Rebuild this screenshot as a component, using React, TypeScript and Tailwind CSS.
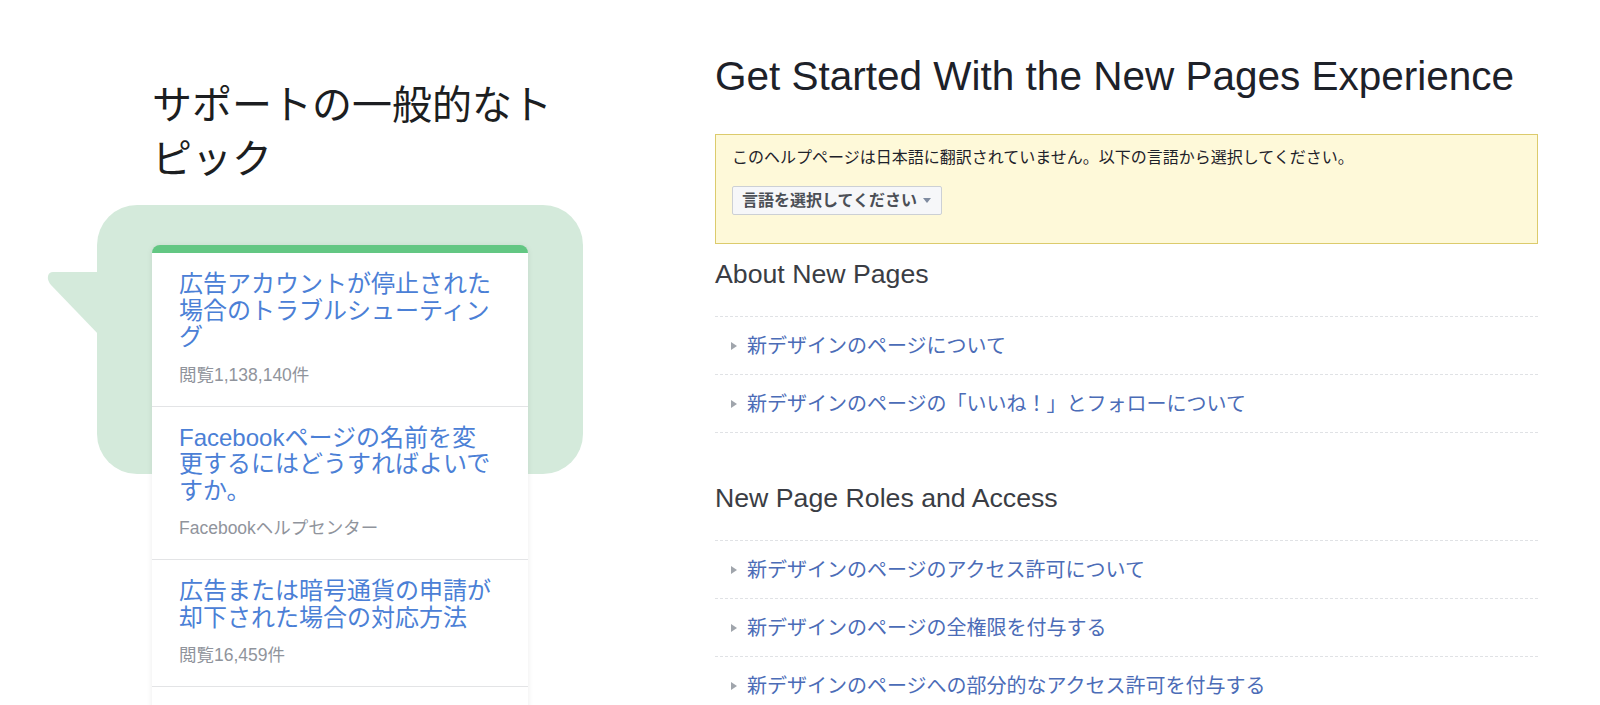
import React from "react";

const topics = [
  {
    title: "広告アカウントが停止された場合のトラブルシューティング",
    meta: "閲覧1,138,140件",
  },
  {
    title: "Facebookページの名前を変更するにはどうすればよいですか。",
    meta: "Facebookヘルプセンター",
  },
  {
    title: "広告または暗号通貨の申請が却下された場合の対応方法",
    meta: "閲覧16,459件",
  },
];

const sections = [
  {
    heading: "About New Pages",
    links: ["新デザインのページについて", "新デザインのページの「いいね！」とフォローについて"],
  },
  {
    heading: "New Page Roles and Access",
    links: [
      "新デザインのページのアクセス許可について",
      "新デザインのページの全権限を付与する",
      "新デザインのページへの部分的なアクセス許可を付与する",
    ],
  },
];

function TopicCard() {
  return (
    <div className="relative mx-[55px] bg-white border-t-[8px] border-[#63c783] rounded-t-[8px] shadow-[0_1px_6px_rgba(0,0,0,0.08)]">
      {topics.map((t) => (
        <div key={t.meta} className="pl-[27px] pr-[33px] pt-[18px] pb-[21px] border-b border-[#e3e4e6]">
          <a href="#" className="block text-[24px] leading-[26.5px] text-[#4b80d6]">
            {t.title}
          </a>
          <div className="mt-[14px] text-[17.5px] leading-[20px] text-[#90949c]">{t.meta}</div>
        </div>
      ))}
      <div className="h-[60px]" />
    </div>
  );
}

export default function App() {
  return (
    <div className="w-full h-[705px] overflow-hidden bg-white font-['Liberation_Sans','Noto_Sans_CJK_JP',sans-serif]">
      <div className="flex pl-[97px] pt-[52px]">
        {/* Left column */}
        <div className="w-[486px] shrink-0 pt-[26px]">
          <h2 className="pl-[55px] text-[40px] leading-[54px] font-normal text-[#1c1e21]">
            サポートの一般的なトピック
          </h2>

          <div className="relative mt-[19px] pt-[40px]">
            {/* speech bubble */}
            <div className="absolute left-0 right-0 top-0 h-[269px] rounded-[40px] bg-[#d4eadb]" />
            <svg
              className="absolute left-[-52px] top-[66px]"
              width="56"
              height="72"
              viewBox="0 0 56 72"
            >
              <path d="M8 1 L56 1 L56 66 L6 14 Q2 9 3 5 Q4 1 8 1 Z" fill="#d4eadb" />
            </svg>
            <TopicCard />
          </div>
        </div>

        {/* Right column */}
        <div className="ml-[132px] w-[823px] shrink-0">
          <h1 className="text-[40.5px] leading-[48px] font-normal text-[#1d2129]">
            Get Started With the New Pages Experience
          </h1>

          <div className="mt-[34px] border border-[#dccb6c] bg-[#fef9d9] pl-[16px] pt-[13px] pb-[28px]">
            <p className="text-[16px] leading-[20px] text-[#1d2129]">
              このヘルプページは日本語に翻訳されていません。以下の言語から選択してください。
            </p>
            <button className="mt-[18px] h-[29px] inline-flex items-center gap-[6px] pl-[9px] pr-[10px] border border-[#ccd0d5] bg-[#f6f7f9] rounded-[2px] text-[16px] font-bold text-[#4b4f56]">
              言語を選択してください
              <span className="w-0 h-0 border-x-[4.5px] border-x-transparent border-t-[5px] border-t-[#7f8ba0]" />
            </button>
          </div>

          {sections.map((s, i) => (
            <div key={s.heading} className={i === 0 ? "mt-[14px]" : "mt-[49px]"}>
              <h2 className="text-[26.7px] leading-[32px] font-normal text-[#3a3d44] mb-[26px]">
                {s.heading}
              </h2>
              <ul className="border-b border-dashed border-[#e0e2e5]">
                {s.links.map((l) => (
                  <li
                    key={l}
                    className="h-[58px] flex items-center gap-[10px] pl-[16px] border-t border-dashed border-[#e0e2e5]"
                  >
                    <span className="w-0 h-0 border-y-[4px] border-y-transparent border-l-[6px] border-l-[#a0a5ac]" />
                    <a href="#" className="text-[20px] leading-[26px] text-[#4b6cb7]">
                      {l}
                    </a>
                  </li>
                ))}
              </ul>
            </div>
          ))}
        </div>
      </div>
    </div>
  );
}
